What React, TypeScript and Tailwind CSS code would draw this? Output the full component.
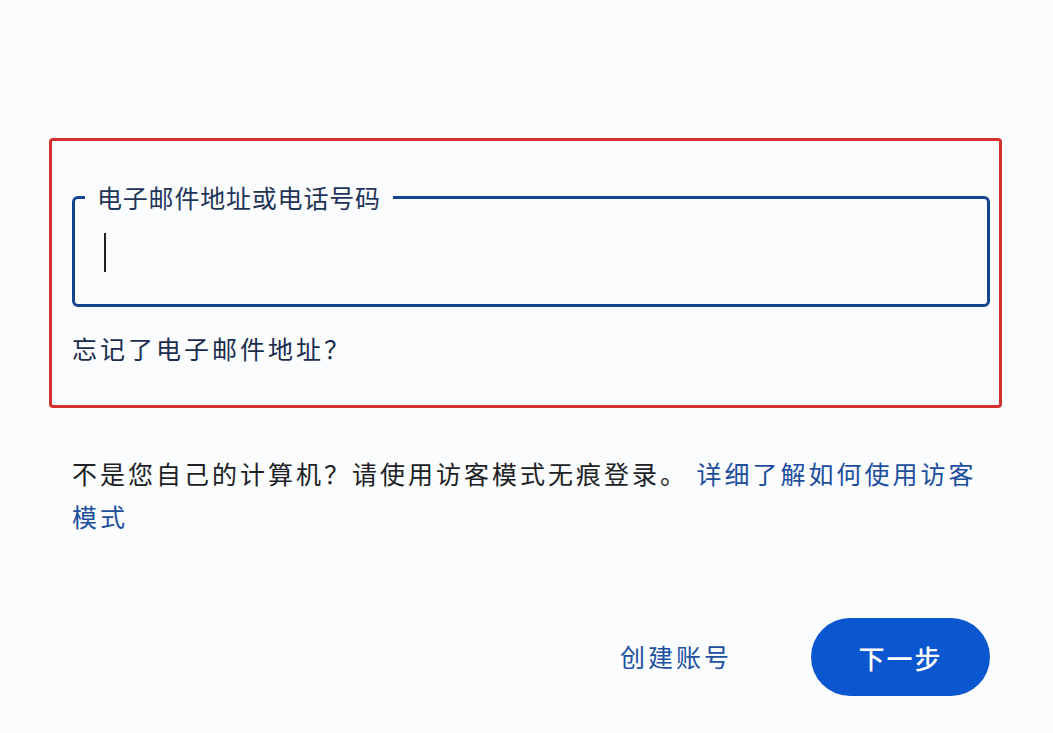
import * as React from "react";

const font = { fontFamily: '"Noto Sans CJK SC", "Noto Sans", sans-serif' };

export default function App() {
  return (
    <div style={font} className="min-h-screen w-full bg-[#fbfcfe] pt-[138px] pl-[49px] pr-[51px]">
      <div className="rounded-[4px] border-[3px] border-[#d3302b] pt-[41px] pl-[20px] pr-[9px] pb-[41px]">
        <fieldset className="m-0 rounded-[6px] border-[3px] border-[#16458f] p-0">
          <legend className="ml-[10px] px-[12px] text-[25px] leading-[30px] tracking-[0.8px] text-[#1f3558]">电子邮件地址或电话号码</legend>
          <div className="h-[92px] pt-[21px] pl-[29px]">
            <div className="h-[39px] w-[2px] bg-[#222]" />
          </div>
        </fieldset>
        <p className="mt-[25px] text-[25px] leading-[32px] tracking-[3px] text-[#1a2c4d]">忘记了电子邮件地址？</p>
      </div>

      <p className="mt-[44px] ml-[23px] w-[915px] text-[25px] leading-[43px] tracking-[3px] text-[#202124]">
        不是您自己的计算机？请使用访客模式无痕登录。 <span className="text-[#1c4e9c]">详细了解如何使用访客模式</span>
      </p>

      <div className="mt-[80px] flex items-center justify-end pr-[12px]">
        <span className="text-[25px] tracking-[3px] text-[#21519f]">创建账号</span>
        <button className="ml-[79px] flex h-[78px] w-[179px] items-center justify-center rounded-full bg-[#0b57d0] text-[26px] font-medium tracking-[2px] text-white">
          下一步
        </button>
      </div>
    </div>
  );
}
